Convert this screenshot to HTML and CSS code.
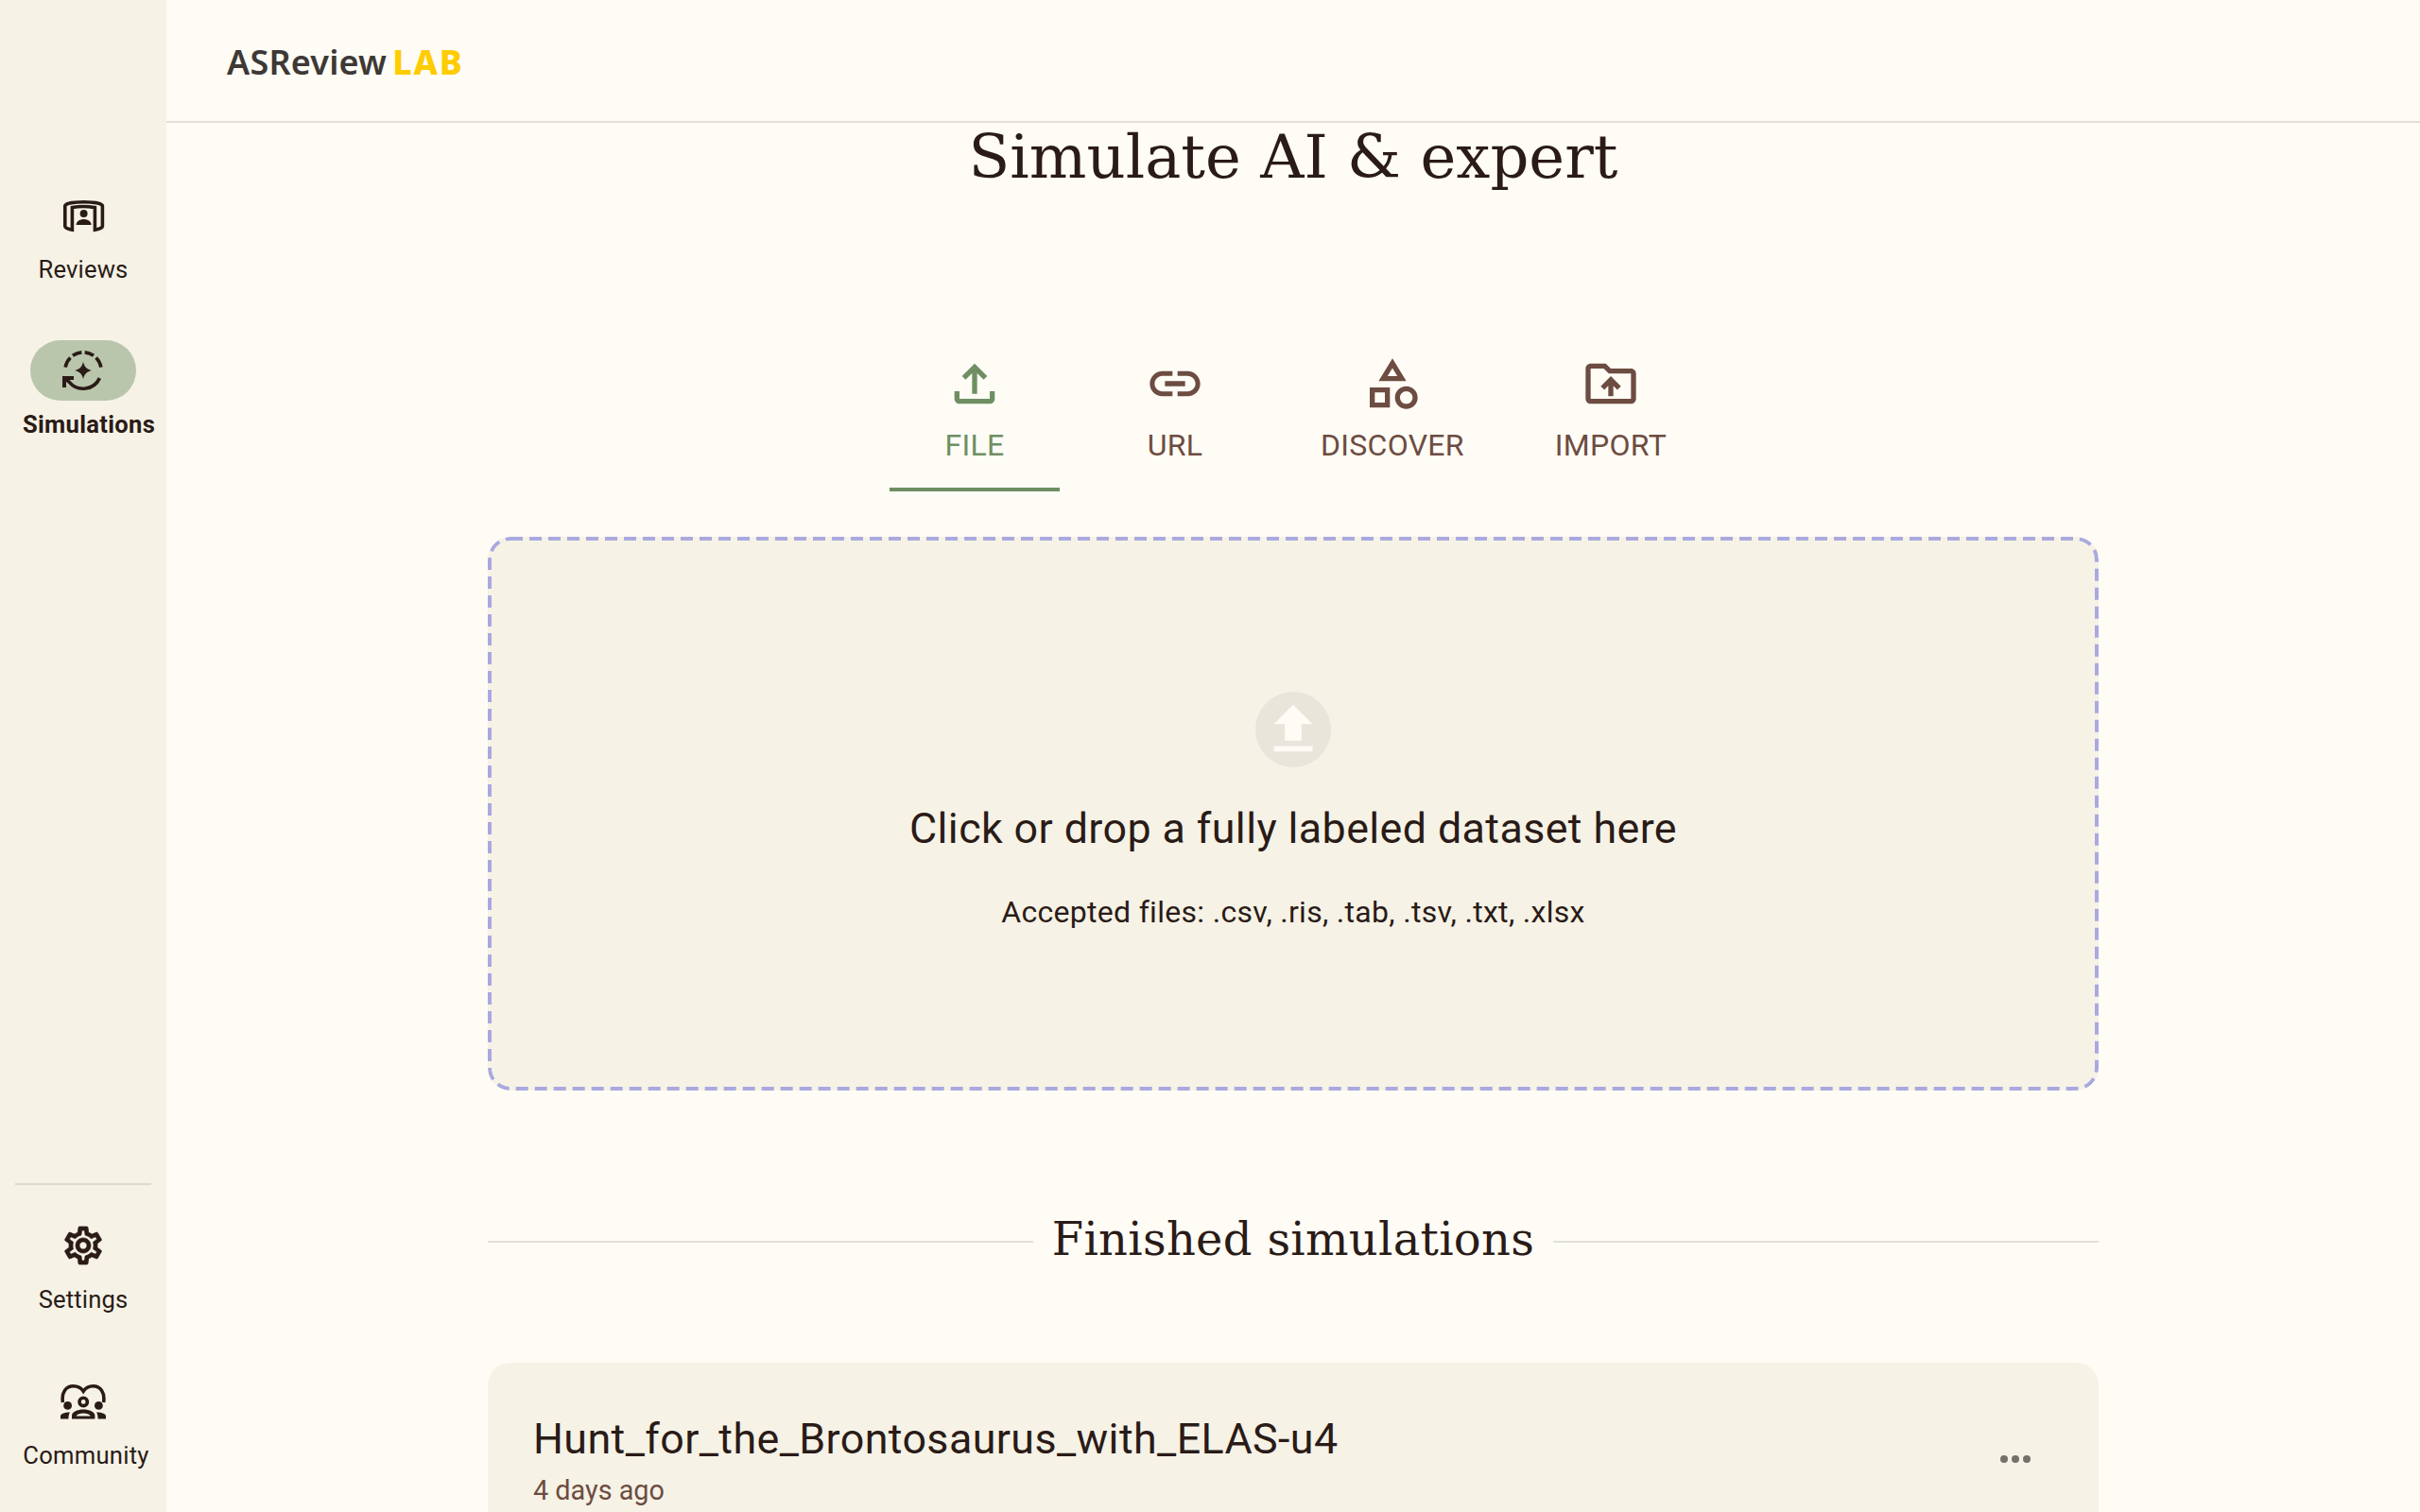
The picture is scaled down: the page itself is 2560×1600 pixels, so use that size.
FILE: index.html
```html
<!DOCTYPE html>
<html lang="en">
<head>
<meta charset="utf-8">
<title>ASReview LAB</title>
<link rel="stylesheet" href="styles.css">
</head>
<body>
<div class="app">
  <nav class="sidebar">
    <div class="nav-top">
      <a class="nav-item">
        <span class="pill">
          <svg class="nav-icon" viewBox="0 0 24 24"><path class="ln" d="M6.200 7.800V19.600C4 19.200 2.400 18.600 2.400 17.800V7C2.400 5.500 7.500 4.900 12.300 4.900S22.200 5.500 22.200 7V17.800C22.200 18.600 20.400 19.200 18.200 19.600V7.800C14 7.100 10 7.100 6.200 7.800Z"/><circle class="fl" cx="12.300" cy="11" r="2"/><path class="fl" d="M8.300 17c0-2 2.200-3 4-3s4 1 4 3z"/></svg>
        </span>
        <span class="nav-label">Reviews</span>
      </a>
      <a class="nav-item">
        <span class="pill pill-active">
          <svg class="nav-icon" viewBox="0 0 24 24"><path class="ln" d="M2.550 10.330A9.600 9.600 0 0 1 5.210 5.210M6.490 4.140A9.600 9.600 0 0 1 11.160 2.440M12.840 2.440A9.600 9.600 0 0 1 17.510 4.140M18.790 5.210A9.600 9.600 0 0 1 21.450 10.330M20.700 16.060A9.600 9.600 0 0 1 4.650 18.170L2 16"/><path class="fl" d="M1 15h6v2H3v4H1z"/><path class="fl" d="M12 7.400C12.500 10 14 11.500 16.500 12 14 12.500 12.500 14 12 16.600 11.500 14 10 12.500 7.500 12 10 11.500 11.500 10 12 7.400Z"/></svg>
        </span>
        <span class="nav-label nav-label-active">Simulations</span>
      </a>
    </div>
    <div class="nav-bottom">
      <div class="nav-divider"></div>
      <a class="nav-item">
        <span class="pill">
          <svg class="nav-icon" viewBox="0 0 24 24"><path class="fl fl-heavy" d="M19.430 12.980c.04-.32.07-.64.07-.98 0-.34-.03-.66-.07-.98l2.110-1.650c.19-.15.24-.42.12-.64l-2-3.460c-.09-.16-.26-.25-.44-.25-.06 0-.12.01-.17.03l-2.490 1c-.52-.4-1.080-.73-1.690-.98l-.38-2.650C14.460 2.180 14.250 2 14 2h-4c-.25 0-.46.18-.49.42l-.38 2.650c-.61.25-1.170.59-1.690.98l-2.490-1c-.06-.02-.12-.03-.18-.03-.17 0-.34.09-.43.25l-2 3.460c-.13.22-.07.49.12.64l2.110 1.650c-.04.32-.07.65-.07.98 0 .33.03.66.07.98l-2.110 1.650c-.19.15-.24.42-.12.64l2 3.460c.09.16.26.25.44.25.06 0 .12-.01.17-.03l2.490-1c.52.4 1.080.73 1.690.98l.38 2.650c.03.24.24.42.49.42h4c.25 0 .46-.18.49-.42l.38-2.650c.61-.25 1.170-.59 1.690-.98l2.490 1c.06.02.12.03.18.03.17 0 .34-.09.43-.25l2-3.460c.12-.22.07-.49-.12-.64l-2.110-1.650zm-1.980-1.710c.04.31.05.52.05.73 0 .21-.02.43-.05.73l-.14 1.130.89.7 1.080.84-.7 1.210-1.270-.51-1.040-.42-.9.68c-.43.32-.84.56-1.250.73l-1.060.43-.16 1.130-.2 1.350h-1.400l-.19-1.350-.16-1.130-1.060-.43c-.43-.18-.83-.41-1.230-.71l-.91-.7-1.060.43-1.270.51-.7-1.210 1.080-.84.89-.7-.14-1.130c-.03-.31-.05-.54-.05-.74s.02-.43.05-.73l.14-1.130-.89-.7-1.080-.84.7-1.210 1.270.51 1.040.42.9-.68c.43-.32.84-.56 1.250-.73l1.060-.43.16-1.130.2-1.350h1.390l.19 1.350.16 1.130 1.060.43c.43.18.83.41 1.230.71l.91.7 1.060-.43 1.270-.51.7 1.210-1.070.85-.89.7.14 1.130zM12 8c-2.210 0-4 1.790-4 4s1.790 4 4 4 4-1.790 4-4-1.790-4-4-4zm0 6c-1.100 0-2-.9-2-2s.9-2 2-2 2 .9 2 2-.9 2-2 2z"/></svg>
        </span>
        <span class="nav-label">Settings</span>
      </a>
      <a class="nav-item nav-item-last">
        <span class="pill">
          <svg class="nav-icon" viewBox="0 0 24 24"><path class="ln" d="M1.200 12.500C.4 7 3 3.900 6.800 3.900 9 3.900 11 5 12.100 6.600 13.200 5 15 3.900 17.200 3.900 21 3.900 23.600 7 22.800 12.500"/><circle class="ln" cx="12.100" cy="12.200" r="2.100"/><circle class="fl" cx="3.800" cy="14.200" r="2.200"/><circle class="fl" cx="20.200" cy="14.200" r="2.200"/><path class="fl" d="M0 21.300V19.800C0 18.500 1.800 17.700 5 17.700 4.400 18.500 4.200 20 4.200 21.300zM24 21.300V19.800C24 18.500 22.200 17.700 19 17.700 19.600 18.500 19.800 20 19.800 21.300z"/><path class="fl" fill-rule="evenodd" d="M6 21.300V19.500C6 17.600 9 16.300 12.100 16.300S18.200 17.600 18.200 19.500V21.300ZM8.300 19.700H15.900C15.300 18.800 13.700 18.300 12.100 18.300S8.900 18.800 8.300 19.700Z"/></svg>
        </span>
        <span class="nav-label nav-label-wide">Community</span>
      </a>
    </div>
  </nav>
  <div class="main">
    <header class="topbar">
      <div class="logo"><span class="logo-name">ASReview</span><span class="logo-lab">LAB</span></div>
    </header>
    <div class="content">
      <h1 class="page-title">Simulate AI &amp; expert</h1>
      <div class="tabs">
        <button class="tab tab-active">
          <svg class="tab-icon" viewBox="0 0 24 24"><path d="M18 15v3H6v-3H4v3c0 1.100.9 2 2 2h12c1.100 0 2-.9 2-2v-3h-2zM7 9l1.410 1.410L11 7.830V16h2V7.830l2.590 2.580L17 9l-5-5-5 5z"/></svg>
          <span>FILE</span>
        </button>
        <button class="tab">
          <svg class="tab-icon" viewBox="0 0 24 24"><path d="M3.900 12c0-1.710 1.390-3.100 3.100-3.100h4V7H7c-2.760 0-5 2.240-5 5s2.240 5 5 5h4v-1.900H7c-1.710 0-3.100-1.390-3.100-3.100zM8 13h8v-2H8v2zm9-6h-4v1.900h4c1.710 0 3.100 1.390 3.100 3.100s-1.390 3.100-3.100 3.100h-4V17h4c2.760 0 5-2.240 5-5s-2.240-5-5-5z"/></svg>
          <span>URL</span>
        </button>
        <button class="tab">
          <svg class="tab-icon" viewBox="0 0 24 24"><path d="m12 2-5.500 9h11L12 2zm0 3.840L13.930 9h-3.870L12 5.840zM17.500 13c-2.490 0-4.500 2.010-4.500 4.500s2.010 4.500 4.500 4.500 4.500-2.010 4.500-4.500-2.010-4.500-4.500-4.500zm0 7c-1.380 0-2.500-1.120-2.500-2.500s1.120-2.500 2.500-2.500 2.500 1.120 2.500 2.500-1.120 2.500-2.500 2.500zM3 21.500h8v-8H3v8zm2-6h4v4H5v-4z"/></svg>
          <span>DISCOVER</span>
        </button>
        <button class="tab">
          <svg class="tab-icon" viewBox="0 0 24 24"><path d="M20 6h-8l-2-2H4c-1.110 0-1.990.89-1.990 2L2 18c0 1.110.89 2 2 2h16c1.110 0 2-.89 2-2V8c0-1.110-.89-2-2-2zm0 12H4V6h5.170l2 2H20v10zM9.410 14.420 11 12.840V17h2v-4.160l1.590 1.590L16 13.010 12.010 9 8 13.010l1.410 1.410z"/></svg>
          <span>IMPORT</span>
        </button>
      </div>
      <div class="dropzone">
        <div class="drop-circle">
          <svg class="drop-icon" viewBox="0 0 24 24"><path d="M9 16h6v-6h4l-7-7-7 7h4zm-4 2h14v2H5z"/></svg>
        </div>
        <div class="drop-title">Click or drop a fully labeled dataset here</div>
        <div class="drop-sub">Accepted files: .csv, .ris, .tab, .tsv, .txt, .xlsx</div>
      </div>
      <div class="section-head">
        <h2 class="section-title">Finished simulations</h2>
      </div>
      <article class="card">
        <div class="card-text">
          <div class="card-title">Hunt_for_the_Brontosaurus_with_ELAS-u4</div>
          <div class="card-date">4 days ago</div>
        </div>
        <div class="card-more"><i></i><i></i><i></i></div>
      </article>
    </div>
  </div>
</div>
</body>
</html>
```
FILE: styles.css
```css
* { box-sizing: border-box; }
html, body { margin: 0; height: 100%; overflow: hidden; }
body {
  background: #fffcf6;
  color: #2a1b17;
  font-family: Roboto, "Liberation Sans", sans-serif;
}
.app { display: flex; height: 1600px; overflow: hidden; }

/* Sidebar */
.sidebar {
  width: 176px;
  flex: none;
  background: #f6f2e6;
  display: flex;
  flex-direction: column;
  justify-content: space-between;
  padding: 196px 0 45px;
}
.nav-top, .nav-bottom { display: flex; flex-direction: column; gap: 60px; }
.nav-item { display: flex; flex-direction: column; align-items: center; gap: 8px; }
.nav-item-last { margin-top: 1px; }
.pill {
  width: 112px;
  height: 64px;
  border-radius: 32px;
  display: flex;
  align-items: center;
  justify-content: center;
}
.pill-active { background: #b9c6ac; }
.nav-icon { width: 48px; height: 48px; }
.ln { fill: none; stroke: #2a1b17; stroke-width: 1.8; }
.fl { fill: #2a1b17; }
.fl-heavy { stroke: #2a1b17; stroke-width: 0.35; }
.nav-label {
  margin: 1px 0 -1px;
  font-size: 25.6px;
  line-height: 32px;
  letter-spacing: 0.15px;
  white-space: nowrap;
}
.nav-label-active { font-weight: 700; margin-left: 12px; letter-spacing: 0.3px; }
.nav-label-wide { margin-left: 6px; letter-spacing: 0.25px; }
.nav-divider { height: 2px; margin: 0 16px -28px; background: #dcd9cf; }

/* Main column */
.main { flex: 1; min-width: 0; display: flex; flex-direction: column; }
.topbar {
  height: 130px;
  flex: none;
  display: flex;
  align-items: center;
  padding: 4px 0 0 64px;
  border-bottom: 2px solid #e3e0da;
}
.logo { display: flex; gap: 6px; font-family: "Noto Sans", sans-serif; font-size: 36px; line-height: 44px; font-weight: 600; }
.logo-name { color: #3d3935; letter-spacing: 0.2px; }
.logo-lab { color: #ffcc00; font-weight: 800; letter-spacing: 1.8px; }

.content { width: 1704px; margin: 0 auto; }
.page-title {
  margin: 0 0 172px;
  text-align: center;
  font-family: "DejaVu Serif", serif;
  font-weight: 400;
  font-size: 64px;
  line-height: 72px;
}

/* Tabs */
.tabs { display: flex; justify-content: center; gap: 32px; }
.tab {
  min-width: 180px;
  height: 146px;
  padding: 0 32px;
  border: 0;
  border-bottom: 4px solid transparent;
  background: none;
  color: #6d4c41;
  font-family: inherit;
  font-size: 32px;
  line-height: 40px;
  letter-spacing: 0.3px;
  display: flex;
  flex-direction: column;
  align-items: center;
  gap: 13px;
}
.tab-active { color: #6f8f63; border-bottom-color: #6f8f63; }
.tab-icon { width: 64px; height: 64px; fill: currentColor; flex: none; }

/* Drop zone */
.dropzone {
  margin-top: 48px;
  height: 586px;
  padding-bottom: 2px;
  border-radius: 24px;
  background-color: #f6f2e6;
  background-image: url("data:image/svg+xml,%3Csvg xmlns='http://www.w3.org/2000/svg' width='100%25' height='100%25'%3E%3Crect x='2' y='2' width='1700' height='582' rx='22' fill='none' stroke='%23a9a9e0' stroke-width='4' stroke-dasharray='13 7'/%3E%3C/svg%3E");
  display: flex;
  flex-direction: column;
  align-items: center;
  justify-content: center;
}
.drop-circle {
  width: 80px;
  height: 80px;
  border-radius: 50%;
  background: #e8e5db;
  display: flex;
  align-items: center;
  justify-content: center;
}
.drop-icon { width: 70px; height: 70px; fill: #fffcf6; }
.drop-title { margin-top: 35px; font-size: 44.8px; line-height: 60px; letter-spacing: 0.4px; }
.drop-sub { margin-top: 35px; font-size: 32px; line-height: 46px; letter-spacing: 0.3px; }

/* Section heading */
.section-head {
  margin-top: 125px;
  display: flex;
  align-items: center;
  gap: 20px;
}
.section-head::before, .section-head::after {
  content: "";
  flex: 1;
  height: 2px;
  margin-top: 6px;
  background: #e3e0da;
}
.section-title {
  margin: 0;
  font-family: "DejaVu Serif", serif;
  font-weight: 400;
  font-size: 48px;
  line-height: 64px;
  letter-spacing: 0.3px;
}

/* Card */
.card {
  margin-top: 99px;
  height: 300px;
  padding: 48px 72px 0 48px;
  background: #f6f2e6;
  border-radius: 24px;
  display: flex;
  justify-content: space-between;
  align-items: flex-start;
}
.card-title { font-size: 44.8px; line-height: 64px; letter-spacing: 0.4px; padding-top: 1px; margin-bottom: -1px; }
.card-date { margin-top: 3px; font-size: 28.8px; line-height: 40px; color: #6d4c41; }
.card-more { display: flex; gap: 4px; margin-top: 50px; }
.card-more i { width: 8px; height: 8px; border-radius: 50%; background: #73716a; }
```
